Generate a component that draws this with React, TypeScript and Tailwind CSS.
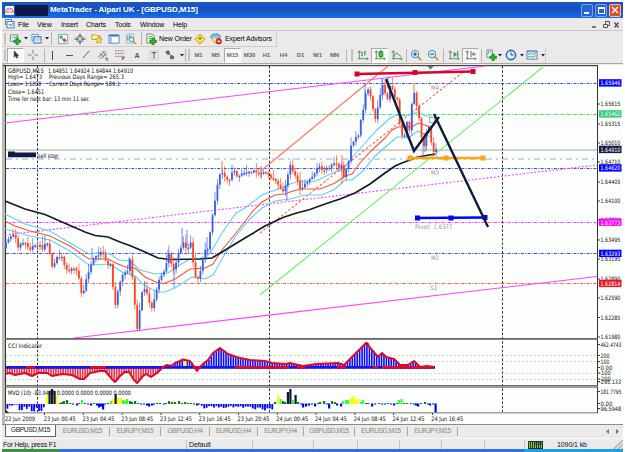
import React from "react";

type Pt = [number, number];

const PRICE: Pt[] = [
  [6, 243], [8, 240], [13, 236], [16, 238], [18, 247], [23, 243], [28, 246], [31, 249], [35, 244], [40, 246], [43, 250], [45, 243], [48, 244], [50, 255], [52, 267], [54, 265], [56, 258], [58, 256], [62, 258], [66, 268], [68, 273], [71, 268], [76, 270], [79, 280], [81, 292], [84, 291], [86, 279], [89, 272], [92, 259], [95, 258], [101, 254], [104, 255], [107, 266], [110, 261], [112, 278], [114, 299], [116, 306], [118, 288], [121, 278], [124, 270], [127, 276], [129, 262], [131, 259], [133, 285], [135, 308], [137, 329], [139, 325], [140, 300], [144, 287], [147, 293], [150, 306], [152, 308], [154, 300], [158, 286], [160, 277], [163, 272], [166, 267], [168, 252], [170, 254], [172, 271], [176, 264], [180, 248], [183, 243], [187, 248], [191, 243], [193, 262], [195, 275], [197, 282], [199, 276], [202, 264], [204, 251], [208, 250], [212, 217], [215, 200], [217, 185], [219, 178], [221, 172], [223, 171], [225, 177], [229, 184], [231, 172], [235, 172], [238, 178], [242, 172], [249, 173], [254, 171], [258, 174], [263, 172], [267, 174], [270, 176], [274, 179], [277, 185], [280, 188], [283, 190], [287, 184], [289, 164], [291, 165], [294, 175], [298, 181], [301, 191], [304, 186], [308, 182], [312, 178], [316, 172], [319, 167], [323, 169], [328, 168], [332, 163], [336, 164], [339, 168], [341, 163], [343, 181], [345, 172], [348, 167], [350, 148], [354, 140], [358, 136], [360, 125], [363, 110], [366, 92], [367, 85], [369, 92], [372, 102], [375, 121], [377, 110], [380, 98], [382, 84], [385, 93], [387, 102], [390, 85], [392, 88], [395, 98], [397, 97], [399, 120], [401, 135], [404, 137], [407, 122], [409, 132], [411, 117], [413, 88], [415, 98], [417, 107], [419, 116], [421, 132], [423, 150], [425, 140], [427, 128], [430, 127], [432, 152], [434, 153], [436, 150],
];

const CCI: Pt[] = [
  [5, 374], [10, 373], [15, 375], [25, 373], [32, 376], [38, 373], [47, 373], [52, 376], [62, 374], [72, 375], [80, 379], [84, 379], [90, 373], [100, 371], [105, 371], [112, 379], [115, 382], [120, 376], [125, 372], [129, 372], [134, 380], [137, 383], [143, 376], [146, 374], [151, 377], [157, 373], [163, 367], [167, 365], [171, 366], [175, 363], [180, 361], [183, 359.5], [190, 361], [193, 365], [197, 371], [200, 367], [204, 363], [208, 360], [213, 353], [220, 348], [228, 354], [238, 357.5], [250, 360], [265, 361], [272, 363], [286, 364], [290, 363], [303, 366], [316, 364], [338, 363], [344, 365], [348, 361], [355, 354], [360, 349], [366, 343], [372, 350], [378, 357], [382, 353], [386, 357], [394, 359], [400, 365], [408, 365], [414, 361], [420, 367], [427, 366], [434, 367],
];

const at = (pts: Pt[], x: number) => {
  for (let i = 1; i < pts.length; i++) {
    if (x <= pts[i][0]) {
      const [x0, y0] = pts[i - 1];
      const [x1, y1] = pts[i];
      return y0 + ((y1 - y0) * (x - x0)) / (x1 - x0);
    }
  }
  return pts[pts.length - 1][1];
};

const noise = (i: number) => {
  const v = Math.sin(i * 91.7 + 3.1) * 4375.5;
  return v - Math.floor(v);
};

const STEP = 2.43;
const candles = Array.from({ length: 178 }, (_, i) => {
  const x = 6 + i * STEP;
  const open = at(PRICE, x - STEP) + (noise(i) - 0.5) * 3;
  const close = at(PRICE, x) + (noise(i + 1) - 0.5) * 3;
  const top = Math.min(open, close);
  const bottom = Math.max(open, close, top + 1.6);
  const r = noise(i + 400);
  return { x, top, bottom, high: top - 1 - r * r * 8, low: bottom + 1 + noise(i + 900) * 4, up: close < open };
});

const longWicks: [number, number, number][] = [
  [13, 229, 236], [92, 248, 259], [129, 257, 268], [168, 250, 262], [182, 228, 245], [187, 230, 246], [207, 237, 255], [174, 268, 288],
  [222, 161, 172], [261, 166, 178], [287, 184, 201], [300, 172, 195], [342, 155, 184], [365, 83, 108], [382, 78, 96], [414, 84, 92], [423, 140, 156], [425, 133, 152], [388, 77, 88],
];

const BLACK_MA = "5,201 25,209 45,214.5 62,222 85,232 95,235.5 108,237 120,242 131,246 145,252 158,258 170,259.5 200,259 212,258 222,252 245,238 265,226 283,217.5 295,213.5 310,209.5 325,204 340,199 355,193 370,184 385,173 395,166 402,163 410,160 418,157 435,154";
const RED_MA = "5,221 15,226 30,231 50,236 70,246 89,259 108,259 118,264 128,268 135,268 145,277 158,283 164,283.5 175,279 190,269 205,268 213,264 222,250 240,228 253,211 262,202 275,195 285,194 290,192 300,189 320,189 335,183 345,176 352,174 360,163 372,150 385,138 392,130 398,127 412,127 418,123 425,125 431,128";
const UPPER = "5,214 25,224 50,231 70,243 89,254 103,252 112,255 118,260 130,261 140,270 155,274 168,273 178,266 190,259 205,258 211,252 222,233 236,213 245,208 262,195 270,192 284,187 290,184 300,181 312,182 320,179 335,172 345,167 350,160 365,143 377,130 390,118 398,115 405,116 418,112 426,116 432,116";
const LOWER = "5,229 30,236 50,240 70,251 89,265 110,264 122,272 135,276 145,286 158,292 165,292 175,288 192,277 205,279 213,275 222,259 235,237 250,219 262,208 275,201 290,199 305,195 322,195 335,189 345,180 352,180 363,171 375,156 390,143 397,137 410,137 418,131 426,135 432,137";

const SCALE: [number, string, string?][] = [
  [104, "1.65615"], [124, "1.65315"], [143, "1.65010"], [162, "1.64710"], [182, "1.64405"], [201, "1.64100"], [220, "1.63800"], [240, "1.63495"],
  [259, "1.63195"], [279, "1.62890"], [298, "1.62590"], [317.5, "1.62285"], [337, "1.61980"],
  [83, "1.65946", "#0000ff"], [114, "1.65462", "#32cd78"], [149.5, "1.64910", "#101c40"], [168, "1.64620", "#0000ff"], [222.3, "1.63773", "#ff00ff"], [253.5, "1.63293", "#0000ff"], [283.5, "1.62814", "#e81426"],
  [344.5, "462.4743"], [355.5, "200"], [361.5, "100"], [367.5, "0.00"], [373, "-100"], [379, "-200"], [381.5, "-295.133"], [391.5, "181.7795"], [403.5, "0.00"], [408.5, "-96.5948"],
];

const TIMES = ["23 Jun 00:45", "23 Jun 04:45", "23 Jun 08:45", "23 Jun 12:45", "23 Jun 16:45", "23 Jun 20:45", "24 Jun 00:45", "24 Jun 04:45", "24 Jun 08:45", "24 Jun 12:45", "24 Jun 16:45"];

// volume oscillator bars: x, height above (+) or below (-) zero, colour
const Y = "#ffff00", G = "#32ff46", D = "#107c20", K = "#101830", B = "#0000ff";
const MVO: [number, number, string][] = [
  [46, 9, Y], [48.5, 13, K], [51, 15, K], [53.5, 13, K], [56, 8, Y], [59, 1, D], [61, 2, D], [63, 3, D], [66, 4, D], [69, 1, D], [72, -1, B], [76, -2, B], [78, 1, D], [81, 4, G], [84, 1, D], [87, -1, B], [90, -2, B], [93, 1, D], [96, -2, B], [98, -4, B], [100, -3, B], [102, -6, B], [104, -1, B], [107, 1, D], [110, 3, G], [112, 5, Y], [114.5, 10, K], [117, 6, Y], [119.5, 6, Y], [122, 4, G], [124, 3, G], [126, 5, G], [129, 3, D], [131, 2, D], [134, 3, D], [137, 1, D], [140, -1, B], [143, -1, B], [146, -2, B], [148, -3, B], [151, -2, B], [153, -1, B], [156, 1, D], [159, 1, D], [163, -1, B], [165, 1, D], [168, 3, D], [171, 2, D], [174, 2, D], [178, 3, D], [181, 1, D], [184, 2, D], [187, 1, D], [190, 1, D], [193, -1, B], [196, -2, B], [198, -1, B],
  [274, 2, D], [277, 9, Y], [279.5, 5, G], [282, 3, D], [284, 2, D], [286.8, 12, K], [289.3, 15, K], [292, 4, G], [294.5, 9, K], [297, 2, D], [300, -1, B], [302, -4, B], [305, -3, B], [308, -2, B], [311, -1, B], [314, -3, B], [317, 1, D], [319, 2, D], [323, 3, D], [326, -1, B], [328, -5, B], [331, 3, D], [334, 2, D], [336, -2, B], [340, -3, B], [342, 3, G], [345, 4, G], [347, 4, G], [350, 6, Y], [352, 8, Y], [354, 5, Y], [357, 5, Y], [360, 2, G], [362, 4, G], [365, 1, D], [367, 1, D], [371, -3, B], [374, -1, B], [378, 1, D], [381, -1, B], [384, -1, B], [387, 1, D], [390, -1, B], [393, -2, B], [396, 1, D], [398, 4, G], [400.5, 5, G], [403, 1, D], [406, 1, D], [410, 1, D], [413, -1, B], [415, -2, B], [417, -3, B], [420, 1, D], [424, 2, D], [427, -1, B], [429, -2, B], [432, -1, B], [434.5, -9, B],
];

const FONT = "'DejaVu Sans Condensed', 'DejaVu Sans', sans-serif";
const HFONT = "font-['Liberation_Sans',sans-serif]";

function Level({ y, c, dash = "3 1.3 1 1.3" }: { y: number; c: string; dash?: string }) {
  return <line x1="6" x2="597" y1={y} y2={y} stroke={c} strokeDasharray={dash} />;
}

function Txt({ x, y, w, children, fill = "#111", size = 6.1 }: { x: number; y: number; w: number; children: string; fill?: string; size?: number }) {
  return <text x={x} y={y} fontSize={size} fill={fill} textLength={w} lengthAdjust="spacingAndGlyphs">{children}</text>;
}

function Handles({ pts, c }: { pts: Pt[]; c: string }) {
  return (
    <g fill={c} stroke={c}>
      <line x1={pts[0][0]} y1={pts[0][1]} x2={pts[2][0]} y2={pts[2][1]} strokeWidth="2.6" />
      {pts.map(([x, y]) => <rect key={x} x={x - 2} y={y - 2} width="4" height="4" strokeWidth="1" />)}
    </g>
  );
}

function Chart() {
  const bars = Array.from({ length: 176 }, (_, i) => 6.5 + i * STEP);
  return (
    <svg width="621" height="362" viewBox="2 63 621 362" className="block shrink-0" fontFamily={FONT}>
      <rect x="2" y="63" width="621" height="362" fill="#fcfefb" />
      <rect x="2" y="63" width="621" height="1.2" fill="#aaa79f" />
      <rect x="2" y="63" width="3" height="362" fill="#bab9b4" />
      <rect x="3" y="65" width="595" height="1.2" fill="#444" />
      <rect x="5" y="65" width="1" height="348" fill="#333" />
      <rect x="597" y="65" width="1" height="348" fill="#333" />

      <Level y={83.5} c="#3c42ff" />
      <Level y={114.5} c="#42dd55" />
      <rect x="6" y="149.3" width="591" height="1.6" fill="#c9cac8" />
      <Level y={159} c="#8da9e6" dash="6 4 2 4" />
      <Level y={168.5} c="#3c42ff" />
      <Level y={222.5} c="#ff35ff" />
      <Level y={253.5} c="#3c42ff" />
      <Level y={283.5} c="#fc5942" />
      {[355.5, 361.5, 373.5, 379.5].map((y) => <Level key={y} y={y} c="#c4c4c4" dash="1.5 2.5" />)}
      {[37.5, 269.5, 502.5].map((x) => <line key={x} x1={x} x2={x} y1="66" y2="412" stroke="#333" strokeDasharray="2.5 1.8" />)}

      <g fill="none" strokeWidth="1.1">
        <path d="M5 123L485 66M74 338L597 276.5" stroke="#ff45ff" />
        <path d="M5 235L597 165" stroke="#ff45ff" strokeDasharray="2 1.7" />
        <path d="M262 170L388 66" stroke="#ff7460" />
        <path d="M260 233L462 73" stroke="#ff6048" strokeDasharray="2.5 2" />
        <path d="M260 295L543 67" stroke="#6bee66" />
        <polyline points={UPPER} stroke="#62cdf5" />
        <polyline points={LOWER} stroke="#62cdf5" />
        <polyline points={RED_MA} stroke="#f75440" />
      </g>
      <polyline points={BLACK_MA} fill="none" stroke="#151a2a" strokeWidth="1.7" />

      {longWicks.map(([x, a, b]) => <line key={x} x1={x} x2={x} y1={a} y2={b} stroke={at(PRICE, x + 2) > at(PRICE, x - 1) ? "#ff6a45" : "#5b7ce8"} strokeWidth="0.9" />)}
      {candles.map((k, i) => (
        <g key={i} fill={k.up ? "#3b5fe0" : "#fc4422"}>
          <rect x={k.x - 0.4} y={k.high} width="0.8" height={k.low - k.high} opacity="0.8" />
          <rect x={k.x - 0.9} y={k.top} width="1.8" height={k.bottom - k.top} />
        </g>
      ))}

      <path d="M427 66h7l-3.5 3.5z" fill="#777" />
      <rect x="429.5" y="117.5" width="5" height="5" fill="none" stroke="#a9b3aa" />
      <Handles c="#d8052f" pts={[[357, 74], [415, 72.5], [473, 71.5]]} />
      <Handles c="#fca510" pts={[[410, 158], [446, 158], [483, 158]]} />
      <Handles c="#0000ff" pts={[[417.5, 218], [451, 218], [485, 217.5]]} />
      <path d="M386 79L414 151L439 117M434 114L488 227" fill="none" stroke="#101a3c" strokeWidth="2.4" />

      <Txt x={431} y={89.5} w={8} fill="#999">M4</Txt>
      <Txt x={431} y={174.8} w={8} fill="#999">M3</Txt>
      <Txt x={415} y={228.8} w={15} fill="#999">Pivot</Txt>
      <Txt x={433.5} y={228.8} w={19} fill="#999">1.6377</Txt>
      <Txt x={431} y={259.8} w={8} fill="#999">M2</Txt>
      <Txt x={430} y={290.2} w={7.5} fill="#999">S1</Txt>

      <Txt x={8} y={73} w={36}>GBPUSD,M15</Txt>
      <Txt x={48} y={73} w={85}>1.64851 1.64924 1.64844 1.64910</Txt>
      <Txt x={8} y={79.2} w={34}>High= 1.6473</Txt>
      <Txt x={49} y={79.2} w={75}>Previous Days Range= 265.3</Txt>
      <Txt x={8} y={86.3} w={33}>Lows= 1.6208</Txt>
      <Txt x={49} y={86.3} w={71}>Current Days Range= 189.1</Txt>
      <Txt x={8} y={93.5} w={36}>Close= 1.6451</Txt>
      <Txt x={8} y={101} w={81}>Time for next bar: 13 min 11 sec</Txt>
      <path d="M8 151.5h7v1h21v4.8H8z" fill="#0d1b48" />
      <Txt x={38} y={158} w={20}>sell stop</Txt>

      {bars.map((x) => {
        const y = at(CCI, x);
        return <rect key={x} x={x} y={Math.min(y, 367)} width="1.6" height={Math.abs(y - 367)} fill={y > 367 ? "#ea343e" : "#0d0dff"} />;
      })}
      <path d="M184 361h2.5v6h-2.5z" fill="#ff0" />
      <rect x="6" y="366" width="429" height="2.8" fill="#1414f5" />
      <path d="M26 367.4h9M90 367.4h16M193 367.4h7M235 367.4h54M297 367.4h8M337 367.4h9M373 367.4h5M382 367.4h52" stroke="#d80c35" strokeWidth="2.6" />
      <polyline points={CCI.map((p) => p.join(",")).join(" ")} fill="none" stroke="#db0b2e" strokeWidth="2" strokeLinejoin="round" />
      <path d="M364 344.5l3-2.5 3 2.5z" fill="#d00020" />

      {bars.map((x, i) => {
        const h = x < 44 ? 1 + noise(i) * 5 + (x > 18 ? 1.5 : -1) : x > 200 && x < 273 ? 1.5 + noise(i + 9) * 3 + (x > 254 ? 2 : 0) : 0;
        return h > 0 ? <rect key={x} x={x} y="404" width="1.8" height={h} fill="#0000ff" /> : null;
      })}
      {MVO.map(([x, h, c]) => <rect key={x} x={x} y={h > 0 ? 404 - h : 403.5} width="2.2" height={Math.abs(h)} fill={c} />)}

      <g fill="#696969">
        <rect x="5" y="338" width="593" height="1.8" />
        <rect x="5" y="385" width="593" height="1.6" />
        <rect x="5" y="387" width="593" height="0.7" />
        <rect x="5" y="412.4" width="593" height="0.9" />
      </g>
      <Txt x={8} y={348} w={34}>CCI Indicator</Txt>
      <Txt x={8} y={395} w={123}>MVO (10) -83.9424 0.0000 0.0000 0.0000 0.0000</Txt>

      {SCALE.map(([y, label, bg], i) => (
        <g key={i}>
          {bg ? <rect x="599" y={y - 3.8} width="22.5" height="7.4" fill={bg} /> : <rect x="598" y={y - 0.5} width="2" height="1" fill="#444" />}
          <Txt x={label[0] === "-" ? 599 : 600.5} y={y + 2.2} size={6} w={label.length > 7 ? (label[0] === "-" ? 22 : 20.8) : label.length * 2.85 + (label.length < 5 ? 0.4 : 0)} fill={bg ? "#fff" : "#111"}>{label}</Txt>
        </g>
      ))}

      <path d="M6 410l3 3H6z" fill="#222" />
      <Txt x={5} y={421} w={30}>22 Jun 2009</Txt>
      {TIMES.map((t, i) => (
        <g key={i}>
          <rect x={44 + i * 38.8} y="413" width="1" height="2" fill="#444" />
          <Txt x={43.7 + i * 38.75} y={421} w={32}>{t}</Txt>
        </g>
      ))}
      <rect x="2" y="424" width="621" height="1" fill="#8a8a86" />
    </svg>
  );
}

function Slot({ w = "w-[17px]", on, children }: { w?: string; on?: boolean; children?: React.ReactNode }) {
  return (
    <div className={`${w} flex h-[15px] shrink-0 items-center justify-center ${on ? "border border-t-[#aaa] border-l-[#aaa] border-r-white border-b-white bg-[#f8f8f6]" : ""}`}>{children}</div>
  );
}

function Ic({ children }: { children: React.ReactNode }) {
  return <svg width="12" height="12" viewBox="0 0 13 13" fill="none" stroke="#666" strokeWidth="1" className="shrink-0">{children}</svg>;
}

const Caret = () => <svg width="4" height="3" viewBox="0 0 4 3" className="shrink-0"><path d="M0 0h4L2 2.5z" fill="#222" /></svg>;
const Sep = ({ w }: { w: string }) => <div className={`${w} flex shrink-0 justify-center`}><div className="h-[13px] w-px bg-[#b5b4ae]" /></div>;
const Grip = () => <div className="mx-[2px] h-[12px] w-[2px] shrink-0 border-r border-l border-[#c3c2bd] bg-white" />;
const Plus = () => <path d="M7.5 5.5h2.6v2.2h2.4v2.6h-2.4v2.2H7.5v-2.2H5.2V7.7h2.3z" fill="#27b526" stroke="#08720d" strokeWidth=".6" />;
const Axes = () => <path d="M2.5 2v9M1 10.5h11M1 4l1.5-2L4 4M10.5 9l1.5 1.5L10.5 12" stroke="#5a735d" strokeWidth=".9" />;

function Glass({ plus }: { plus?: boolean }) {
  return (
    <Ic>
      <path d="M8 8l4 4" stroke="#c89624" strokeWidth="2" />
      <circle cx="5.5" cy="5.5" r="4" fill="#d9eefb" stroke="#3b7fae" />
      <path d={plus ? "M3.5 5.5h4M5.5 3.5v4" : "M3.5 5.5h4"} stroke="#155a8f" strokeWidth="1.2" />
    </Ic>
  );
}

function TitleBar() {
  return (
    <div className="flex h-[16px] shrink-0 items-center bg-linear-to-b from-[#1b58c5] via-[#1651bd] to-[#1470f2] pr-[2px] pl-[3px] text-white">
      <svg width="9" height="9" viewBox="0 0 9 9" className="mr-px shrink-0"><rect width="9" height="9" rx="1" fill="#fff1e6" /><path d="M1 7V4l2-2 1.5 2L6 2l2 2v3M3 7V5M6 7V5" fill="none" stroke="#e0604a" /></svg>
      <div className="h-[11px] w-[33px] shrink-0 bg-[#0d1a45]" />
      <div className="ml-[2px] flex-1 text-[8px] font-bold tracking-[-0.07px] whitespace-pre">MetaTrader - Alpari UK - [GBPUSD,M15]</div>
      <div className="flex gap-[2px]">
        <div className="flex h-[13px] w-[12px] items-end justify-start rounded-[2px] border border-[#7ea3ea] bg-[#2962d8] p-[2px]"><div className="h-[2px] w-[5px] bg-white" /></div>
        <div className="flex h-[13px] w-[12px] items-center justify-center rounded-[2px] border border-[#7ea3ea] bg-[#2962d8]"><div className="h-[7px] w-[7px] border border-t-2 border-white" /></div>
        <div className="flex h-[13px] w-[12px] items-center justify-center rounded-[2px] border border-[#f2c2ae] bg-[#df4f23]"><svg width="8" height="8" viewBox="0 0 8 8"><path d="M1 1l6 6M7 1L1 7" stroke="#fff" strokeWidth="1.5" /></svg></div>
      </div>
    </div>
  );
}

function MenuBar() {
  return (
    <div className="flex h-[13px] shrink-0 items-center border-b border-[#c9c8c4] pl-[3px] text-[7px] tracking-[-0.12px] text-black">
      <svg width="10" height="10" viewBox="0 0 10 10" className="mr-[3px] shrink-0" fill="#eaf5ff" stroke="#4a86bc"><rect x=".5" y=".5" width="6" height="5" /><rect x="2" y="2.5" width="7" height="6.5" /><path d="M3.5 6l1-1 1.5 2 2-3" fill="none" /></svg>
      <span className="w-[19px]">File</span>
      <span className="w-[24px]">View</span>
      <span className="w-[25px]">Insert</span>
      <span className="w-[29px]">Charts</span>
      <span className="w-[25px]">Tools</span>
      <span className="w-[33px]">Window</span>
      <span className="flex-1">Help</span>
      <svg width="32" height="9" viewBox="0 0 32 9" fill="none" stroke="#555"><path d="M1 7h4" strokeWidth="1.5" /><path d="M12.5 4.500h4v3h-4zM14.5 4V1.500h4v4H17" /><path d="M23.5 2.500l4 5M27.5 2.500l-4 5" strokeWidth="1.4" /></svg>
    </div>
  );
}

function StandardBar() {
  return (
    <div className="flex h-[16px] w-[275px] shrink-0 items-center border-r border-b border-[#cdccc7] text-[7px] tracking-[-0.12px]">
      <Grip />
      <Slot w="w-[14px]"><Ic><path d="M1.500 2h8v7h-8z" fill="#eef8ff" stroke="#628b75" /><path d="M3 6l2-2 2 1 2-2" stroke="#409760" /><Plus /></Ic></Slot>
      <Slot w="w-[8px]"><Caret /></Slot>
      <Slot w="w-[14px]"><Ic><path d="M1 1.500h7v7H1z" fill="#e1f0ff" stroke="#5e8fbd" /><path d="M3 4h8v7H3z" fill="#badaf3" stroke="#3d76aa" /><path d="M3 9h8" stroke="#e5f4ff" /></Ic></Slot>
      <Slot w="w-[5px]"><Caret /></Slot>
      <Sep w="w-[5px]" />
      <Slot><Ic><path d="M1.500 1.500h10v10h-10z" fill="#f7fffa" stroke="#70a5c0" /><path d="M3 4l2-1 1 2-2 1z" fill="#2daf3d" stroke="#2daf3d" /><path d="M6 7l2-1 2 2-2 2z" fill="#e54435" stroke="#e54435" /></Ic></Slot>
      <Slot><Ic><circle cx="6.500" cy="6.500" r="3.500" /><path d="M6.500 .5v5M6.500 7.500v5M.5 6.500h5M7.500 6.500h5" stroke="#444" /></Ic></Slot>
      <Slot><Ic><path d="M1 2h4l1 1h4v4H1z" fill="#fff5a1" stroke="#bd9d23" /><path d="M8.500 4l1.100 2.500 2.600.2-2 1.700.7 2.700-2.400-1.500-2.300 1.500.6-2.700-2-1.700 2.700-.2z" fill="#ffe457" stroke="#b98a17" strokeWidth=".8" /></Ic></Slot>
      <Slot><Ic><path d="M1 2h11v9H1z" fill="#fff" stroke="#4686ba" /><path d="M1.500 3h10" stroke="#2369b2" strokeWidth="1.500" /><path d="M2 4h2v7H2z" fill="#8bbae0" stroke="none" /></Ic></Slot>
      <Slot><Ic><path d="M1.500 1h8v10h-8z" fill="#e8f4fb" stroke="#9cb6c6" /><path d="M3 3v5M5 2v4M7 3v4" stroke="#519060" /><circle cx="7" cy="7" r="2.500" fill="#d8efff" stroke="#4b829c" /><path d="M9 9l3 3" stroke="#d1a024" strokeWidth="1.700" /></Ic></Slot>
      <Sep w="w-[5px]" />
      <Slot w="w-[14px]"><Ic><path d="M2 1h5l3 2v8H2z" fill="#eef4e9" stroke="#688d65" /><path d="M4 4h4M4 6h3" stroke="#5b995c" /><Plus /></Ic></Slot>
      <span className="w-[34px] shrink-0 pl-px whitespace-nowrap">New Order</span>
      <Slot w="w-[15px]"><Ic><path d="M6.500 1L12 6.500 6.500 12 1 6.500z" fill="#ffe65b" stroke="#c4951c" /><path d="M6.500 3.500v4M4.500 6h4M6.500 9v1" stroke="#94700a" /></Ic></Slot>
      <Slot w="w-[18px]"><Ic><ellipse cx="6" cy="4" rx="5" ry="3" fill="#83bee9" stroke="#367bad" /><path d="M2 5c1 7 6 8 8 1" fill="#ffe0a1" stroke="#c8a23b" /><circle cx="9.500" cy="9" r="3" fill="#e9382e" stroke="#bb231d" /><path d="M8 9h3" stroke="#fff" strokeWidth="1.300" /></Ic></Slot>
      <span className="shrink-0 whitespace-nowrap">Expert Advisors</span>
    </div>
  );
}

const PERIODS = ["M1", "M5", "M15", "M30", "H1", "H4", "D1", "W1", "MN"];

function ChartBar() {
  return (
    <div className="flex h-[16px] w-[544px] shrink-0 items-center border-r border-[#cdccc7]">
      <Slot w="w-[5px]"><Grip /></Slot>
      <Slot on><Ic><path d="M4.500 2v7l1.700-1.500L7.300 10l1.200-.5-1-2.300H9.500z" fill="#333" stroke="#333" strokeWidth=".5" /></Ic></Slot>
      <Slot><Ic><path d="M6.500 1v4M6.500 8v4M1 6.500h4M8 6.500h4" stroke="#777" /></Ic></Slot>
      <Sep w="w-[6px]" />
      <Slot w="w-[10px]"><div className="h-[9px] w-px bg-[#444]" /></Slot>
      <Slot w="w-[24px]"><div className="h-px w-[7px] bg-[#555]" /></Slot>
      <Slot w="w-[10px]"><Ic><path d="M3 10l7-8" stroke="#555" /></Ic></Slot>
      <Slot w="w-[24px]"><Ic><path d="M1 9l8-7M3 11l8-7M3 4l5 6M6 2l4 6M10 9v3h2.500M10 10.500h2" stroke="#666" strokeWidth=".9" /></Ic></Slot>
      <Slot w="w-[10px]"><Ic><path d="M1 2h10M1 5h10M1 8h10" stroke="#777" strokeDasharray="2 1" /><path d="M9 12V9h3M9 10.500h2" stroke="#a45" /></Ic></Slot>
      <Slot w="w-[24px]"><span className="text-[7px] font-bold text-[#555]">A</span></Slot>
      <Slot w="w-[10px]"><Ic><path d="M2 2h9v9H2z" stroke="#aaa" strokeDasharray="1 1" /><path d="M4 4h5M6.500 4v6" stroke="#444" /></Ic></Slot>
      <Slot w="w-[21px]"><Ic><path d="M2 3l3-1 1 3-2 1zM7 8l2-1 2 2-2 2-2-1z" fill="#666" stroke="#555" /><path d="M5 5l4 3" /></Ic></Slot>
      <Slot w="w-[3px]"><Caret /></Slot>
      <Sep w="w-[4px]" />
      <Slot w="w-[3px]"><Grip /></Slot>
      {PERIODS.map((p) => (
        <Slot key={p} on={p === "M15"}><span className="text-[6px] font-bold tracking-[-0.1px] text-[#666]">{p}</span></Slot>
      ))}
      <Sep w="w-[6px]" />
      <Slot w="w-[5px]"><Grip /></Slot>
      <Slot><Ic><Axes /><path d="M5.500 3v5M4.500 7h1M5.500 4h1M8.500 2v5M7.500 6h1M8.500 3h1" stroke="#17a229" /></Ic></Slot>
      <Slot on><Ic><Axes /><path d="M7.500 1v9" stroke="#08791a" /><path d="M5.500 3h4v5h-4z" fill="#3ccf52" stroke="#09851c" /></Ic></Slot>
      <Slot><Ic><Axes /><path d="M3 9c2-6 4-5 5-3l3 2" stroke="#19a42c" /></Ic></Slot>
      <Sep w="w-[2px]" />
      <Slot><Glass plus /></Slot>
      <Slot><Glass /></Slot>
      <Sep w="w-[4px]" />
      <Slot><Ic><Axes /><path d="M6 3l4 3-4 3z" fill="#24b538" stroke="none" /><path d="M10.500 2v7" stroke="#24843a" /></Ic></Slot>
      <Slot on><Ic><Axes /><path d="M6.500 2v7" stroke="#396c93" /><path d="M12 5.500H8M10 3.500l-2 2 2 2" stroke="#b5372b" /></Ic></Slot>
      <Sep w="w-[4px]" />
      <Slot w="w-[15px]"><Ic><path d="M2 1h6v8H2z" fill="#f0f5f7" stroke="#778b95" /><path d="M3 6c1-5 2-4 4-2" stroke="#557d92" /><Plus /></Ic></Slot>
      <Slot w="w-[4px]"><Caret /></Slot>
      <Slot w="w-[18px]"><Ic><circle cx="6.500" cy="6.500" r="5" fill="#e2f4ff" stroke="#2871bb" strokeWidth="1.700" /><path d="M6.500 3.500v3h3" stroke="#345" /></Ic></Slot>
      <Slot w="w-[3px]"><Caret /></Slot>
      <Slot w="w-[18px]"><Ic><path d="M1 2h11v9H1z" fill="#eef8ff" stroke="#467fac" /><path d="M1 3h11M2 6l3-1 2 1 4-2" stroke="#528b9e" /><path d="M2 9l3-1 2 1 4-2" stroke="#29a547" /></Ic></Slot>
      <Slot w="w-[3px]"><Caret /></Slot>
    </div>
  );
}

function Tab({ w, children }: { w: string; children: string }) {
  return <div className={`${w} flex h-[9px] shrink-0 items-center justify-center border-r border-[#aaa89c]`}>{children}</div>;
}

function Tabs() {
  return (
    <div className="flex h-[13px] shrink-0 items-center pl-[3px] text-[6.6px] tracking-[-0.32px] whitespace-nowrap text-[#8d8876]">
      <div className="flex h-[12px] w-[51px] shrink-0 items-center justify-center self-start border-r border-b border-l border-[#666] bg-[#fcfefb] text-[#222]">GBPUSD,M15</div>
      <Tab w="w-[54px]">EURUSD,M15</Tab>
      <Tab w="w-[51px]">EURJPY,M15</Tab>
      <Tab w="w-[49px]">GBPUSD,H4</Tab>
      <Tab w="w-[48px]">EURUSD,H4</Tab>
      <Tab w="w-[46px]">EURJPY,H4</Tab>
      <Tab w="w-[51px]">GBPUSD,M15</Tab>
      <Tab w="w-[53px]">EURUSD,M15</Tab>
      <Tab w="w-[50px]">EURJPY,M15</Tab>
      <div className="flex flex-1 justify-end pr-[4px]">
        <svg width="13" height="5" viewBox="0 0 13 5"><path d="M3 0v5L0 2.500zM10 0v5l3-2.500z" fill="#777" /></svg>
      </div>
    </div>
  );
}

const Cell = ({ w, children }: { w: string; children?: React.ReactNode }) => (
  <div className={`${w} flex h-[10px] shrink-0 items-center border-r border-[#c3c2bd]`}>{children}</div>
);

function StatusBar() {
  return (
    <div className="flex h-[12px] shrink-0 items-center border-t border-[#f8f8f6] pl-px text-[7px] tracking-[-0.26px] whitespace-nowrap text-[#111]">
      <Cell w="w-[184px]">For Help, press F1</Cell>
      <Cell w="w-[66px]"><span className="pl-[2px] tracking-[-0.1px]">Default</span></Cell>
      <Cell w="w-[61px]" />
      <Cell w="w-[44px]" />
      <Cell w="w-[42px]" />
      <Cell w="w-[42px]" />
      <Cell w="w-[43px]" />
      <Cell w="w-[40px]" />
      <svg width="15" height="8" viewBox="0 0 15 8" className="ml-[3px] shrink-0"><path d="M0 0h15v8H0z" fill="#26381b" /><path d="M1.500 1v6M3.500 1v6M5.500 1v6M7.500 4v3M9.500 4v3M11.500 4v3M13.500 4v3" stroke="#9bc43b" /><path d="M7.500 1v3M9.500 1v3M11.500 1v3M13.500 1v3" stroke="#3f7fa8" /></svg>
      <span className="flex-1 pl-[14px] tracking-[-0.1px]">1090/1 kb</span>
      <svg width="10" height="10" viewBox="0 0 10 10" className="shrink-0 self-end"><path d="M0 10L10 0M4 10l6-6M8 10l2-2" stroke="#aaa99f" strokeWidth="1.300" /></svg>
    </div>
  );
}

export default function App() {
  return (
    <div className={`flex h-[452px] w-[625px] flex-col overflow-hidden bg-white pt-[2px] pl-[2px] leading-none ${HFONT}`}>
      <div className="flex h-[447px] w-[621px] shrink-0 flex-col bg-[#ebe9e9]">
        <TitleBar />
        <MenuBar />
        <StandardBar />
        <ChartBar />
        <Chart />
        <Tabs />
        <StatusBar />
      </div>
      <div className="flex h-[3px] w-[621px] shrink-0">
        <div className="w-[57px] bg-[#3b9048]" />
        <div className="w-[465px] bg-[#2b73df]" />
        <div className="flex-1 bg-[#18a1ed]" />
      </div>
    </div>
  );
}
